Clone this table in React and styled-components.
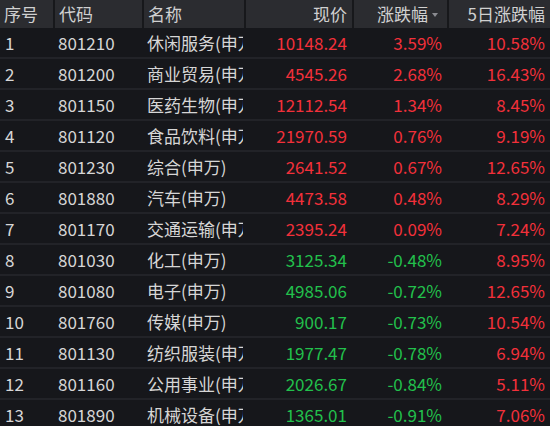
import React from 'react'
import styled, { createGlobalStyle } from 'styled-components'

const GlobalStyle = createGlobalStyle`
  html, body {
    margin: 0;
    padding: 0;
    background: #16171b;
  }
  body {
    font-family: "Noto Sans CJK SC", "Open Sans", sans-serif;
  }
`;

const UP = '#f2303a';
const DOWN = '#22c04c';

const cols = '53px 89px 102px 108px 95px 103px';

const Table = styled.div`
  width: 550px;
  height: 426px;
  overflow: hidden;
  background: #16171b;
  color: #d6d6d6;
  font-size: 17px;
`;

const HeaderRow = styled.div`
  display: grid;
  grid-template-columns: ${cols};
  height: 28px;
  background: #2b2c30;
  color: #d0d0d0;
`;

const HeadCell = styled.div`
  display: flex;
  align-items: center;
  justify-content: ${({ right }) => (right ? 'flex-end' : 'flex-start')};
  padding: 0 ${({ pr }) => pr || 5}px 0 4px;
  height: 28px;
  line-height: 28px;
  border-left: ${({ first }) => (first ? 'none' : '2px solid #17181b')};
  box-sizing: border-box;
  white-space: nowrap;
`;

const SortMark = styled.span`
  display: inline-block;
  width: 0;
  height: 0;
  margin-left: 4px;
  margin-top: 1px;
  border-left: 3px solid transparent;
  border-right: 3px solid transparent;
  border-top: 4px solid #8a8b90;
`;

const Row = styled.div`
  display: grid;
  grid-template-columns: ${cols};
  height: 29px;
  border-bottom: 2px solid #222328;
`;

const Cell = styled.div`
  display: flex;
  align-items: center;
  justify-content: ${({ right }) => (right ? 'flex-end' : 'flex-start')};
  padding: ${({ right }) => (right ? '0 5px 0 0' : '0 0 0 5px')};
  color: ${({ color }) => color || '#d6d6d6'};
  overflow: hidden;
  white-space: nowrap;
  box-sizing: border-box;
  line-height: 29px;
`;

const NameCell = styled(Cell)`
  padding-left: 5px;
  padding-right: 0;
  justify-content: flex-start;
  margin-right: 1px;
`;

const rows = [
  ['1', '801210', '休闲服务(申万)', '10148.24', 3.59, 10.58],
  ['2', '801200', '商业贸易(申万)', '4545.26', 2.68, 16.43],
  ['3', '801150', '医药生物(申万)', '12112.54', 1.34, 8.45],
  ['4', '801120', '食品饮料(申万)', '21970.59', 0.76, 9.19],
  ['5', '801230', '综合(申万)', '2641.52', 0.67, 12.65],
  ['6', '801880', '汽车(申万)', '4473.58', 0.48, 8.29],
  ['7', '801170', '交通运输(申万)', '2395.24', 0.09, 7.24],
  ['8', '801030', '化工(申万)', '3125.34', -0.48, 8.95],
  ['9', '801080', '电子(申万)', '4985.06', -0.72, 12.65],
  ['10', '801760', '传媒(申万)', '900.17', -0.73, 10.54],
  ['11', '801130', '纺织服装(申万)', '1977.47', -0.78, 6.94],
  ['12', '801160', '公用事业(申万)', '2026.67', -0.84, 5.11],
  ['13', '801890', '机械设备(申万)', '1365.01', -0.91, 7.06],
];

const tone = (v) => (v >= 0 ? UP : DOWN);

export default function App() {
  return (
    <Table>
      <GlobalStyle />
      <HeaderRow>
        <HeadCell first>序号</HeadCell>
        <HeadCell>代码</HeadCell>
        <HeadCell>名称</HeadCell>
        <HeadCell right>现价</HeadCell>
        <HeadCell right pr={9}>
          涨跌幅<SortMark />
        </HeadCell>
        <HeadCell right>5日涨跌幅</HeadCell>
      </HeaderRow>
      {rows.map(([no, code, name, price, chg, chg5]) => (
        <Row key={code}>
          <Cell>{no}</Cell>
          <Cell>{code}</Cell>
          <NameCell>{name}</NameCell>
          <Cell right color={tone(chg)}>{price}</Cell>
          <Cell right color={tone(chg)}>{chg.toFixed(2)}%</Cell>
          <Cell right color={tone(chg5)}>{chg5.toFixed(2)}%</Cell>
        </Row>
      ))}
    </Table>
  );
}
